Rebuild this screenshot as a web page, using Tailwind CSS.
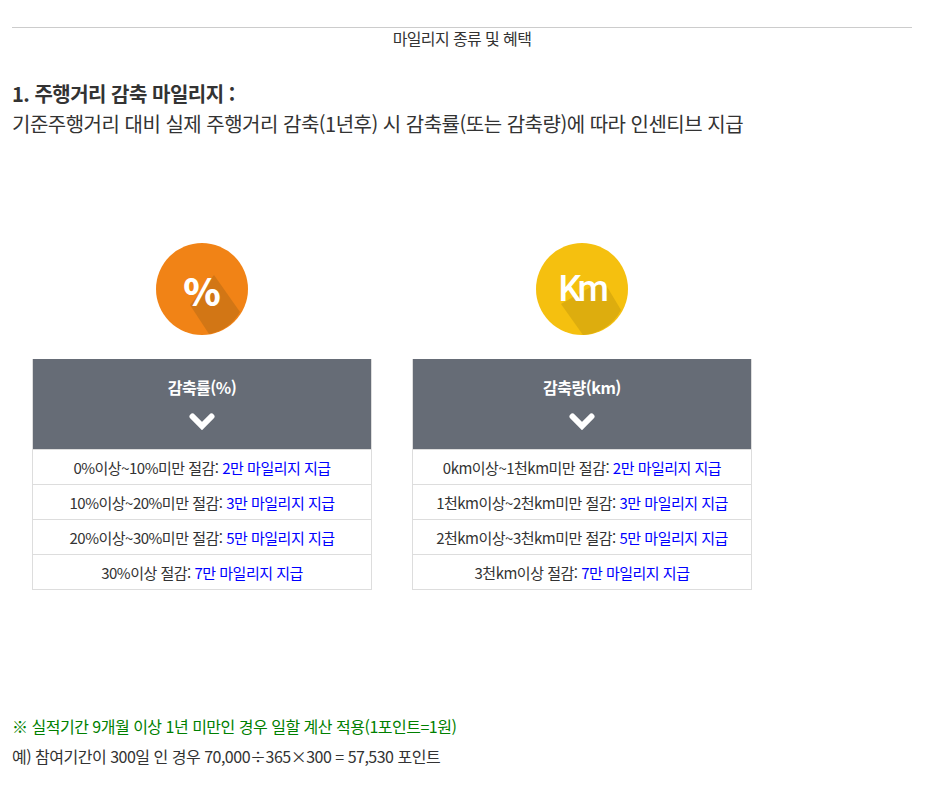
<!DOCTYPE html>
<html lang="ko">
  <head>
    <meta charset="UTF-8" />
    <meta name="viewport" content="width=device-width, initial-scale=1.0" />
    <script src="https://cdn.jsdelivr.net/npm/@tailwindcss/browser@4"></script>
    <title>마일리지 종류 및 혜택</title>
  </head>

  <body class="bg-white font-['Noto_Sans_CJK_KR','Noto_Sans',sans-serif] text-[#333] tracking-[-0.5px]">
    <div class="w-[900px] ml-3 pt-[27px]">
      <div class="border-t border-[#ccc] text-center text-[16px] leading-[20px] tracking-[-0.6px] text-[#333]">마일리지 종류 및 혜택</div>

      <!-- Title -->
      <div class="mt-[31px] text-[20px] leading-[30px]">
        <p class="font-bold">1. 주행거리 감축 마일리지 :</p>
        <p>기준주행거리 대비 실제 주행거리 감축(1년후) 시 감축률(또는 감축량)에 따라 인센티브 지급</p>
      </div>

      <!-- Cards -->
      <div class="flex gap-10 ml-5 mt-[104px]">
        <div class="w-[340px]">
          <div class="relative w-[92px] h-[92px] mx-auto mb-6">
            <svg viewBox="0 0 92 92" class="w-[92px] h-[92px]">
              <circle cx="46" cy="46" r="46" fill="#f18316" />
              <path d="M58 32 L84 69 A46 46 0 0 1 53 91 L34 62 Z" fill="#d27615" />
            </svg>
            <span class="absolute inset-0 flex items-center justify-center text-[38px] font-black tracking-normal text-white">%</span>
          </div>
          <div class="border-x border-[#ddd]">
            <div class="h-[90px] bg-[#666c76] text-white text-center pt-[14px]">
              <p class="text-[16px] leading-[28px] font-bold">감축률(%)</p>
              <svg viewBox="0 0 26 17" class="w-[26px] h-[17px] mx-auto mt-3">
                <path d="M3.5 3.5 L13 13 L22.5 3.5" fill="none" stroke="#fff" stroke-width="6" stroke-linecap="round" />
              </svg>
            </div>
          </div>
          <ul class="border-x border-y border-[#ddd] text-center text-[15px]">
            <li class="h-[35px] leading-[36px] border-b border-[#ddd]">0%이상~10%미만 절감: <span class="text-[#0000ff]">2만 마일리지 지급</span></li>
            <li class="h-[35px] leading-[36px] border-b border-[#ddd]">10%이상~20%미만 절감: <span class="text-[#0000ff]">3만 마일리지 지급</span></li>
            <li class="h-[35px] leading-[36px] border-b border-[#ddd]">20%이상~30%미만 절감: <span class="text-[#0000ff]">5만 마일리지 지급</span></li>
            <li class="h-[34px] leading-[36px]">30%이상 절감: <span class="text-[#0000ff]">7만 마일리지 지급</span></li>
          </ul>
        </div>

        <div class="w-[340px]">
          <div class="relative w-[92px] h-[92px] mx-auto mb-6">
            <svg viewBox="0 0 92 92" class="w-[92px] h-[92px]">
              <circle cx="46" cy="46" r="46" fill="#f5c00f" />
              <path d="M67 37 L85 67 A46 46 0 0 1 47 92 L25 61 Z" fill="#ddad0e" />
            </svg>
            <span class="absolute inset-0 flex items-center justify-center font-['Roboto'] text-[36px] font-medium tracking-[-3.5px] text-white">Km</span>
          </div>
          <div class="border-x border-[#ddd]">
            <div class="h-[90px] bg-[#666c76] text-white text-center pt-[14px]">
              <p class="text-[16px] leading-[28px] font-bold">감축량(km)</p>
              <svg viewBox="0 0 26 17" class="w-[26px] h-[17px] mx-auto mt-3">
                <path d="M3.5 3.5 L13 13 L22.5 3.5" fill="none" stroke="#fff" stroke-width="6" stroke-linecap="round" />
              </svg>
            </div>
          </div>
          <ul class="border-x border-y border-[#ddd] text-center text-[15px]">
            <li class="h-[35px] leading-[36px] border-b border-[#ddd]">0km이상~1천km미만 절감: <span class="text-[#0000ff]">2만 마일리지 지급</span></li>
            <li class="h-[35px] leading-[36px] border-b border-[#ddd]">1천km이상~2천km미만 절감: <span class="text-[#0000ff]">3만 마일리지 지급</span></li>
            <li class="h-[35px] leading-[36px] border-b border-[#ddd]">2천km이상~3천km미만 절감: <span class="text-[#0000ff]">5만 마일리지 지급</span></li>
            <li class="h-[34px] leading-[36px]">3천km이상 절감: <span class="text-[#0000ff]">7만 마일리지 지급</span></li>
          </ul>
        </div>
      </div>

      <!-- Notes -->
      <div class="mt-[121px] text-[16px] leading-[30px]">
        <p class="text-[#008000]">※ 실적기간 9개월 이상 1년 미만인 경우 일할 계산 적용(1포인트=1원)</p>
        <p>예) 참여기간이 300일 인 경우 70,000÷365×300 = 57,530 포인트</p>
      </div>
    </div>
  </body>
</html>
